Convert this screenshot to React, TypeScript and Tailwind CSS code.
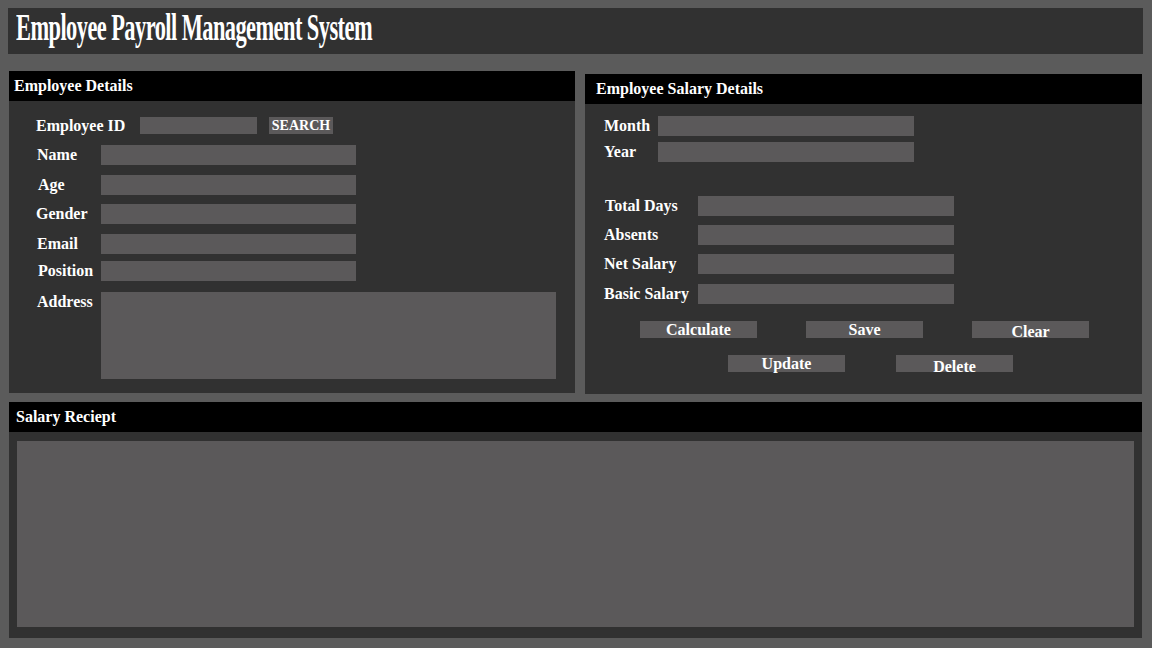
import React from 'react';

const serif = { fontFamily: '"Liberation Serif", "Times New Roman", serif' };

function Field({ w, h = 20 }: { w: number; h?: number }) {
  return <div className="bg-[#5b595a] shrink-0" style={{ width: w, height: h }} />;
}

function Btn({ label, className = '' }: { label: string; className?: string }) {
  return (
    <button
      className={`h-[17px] w-[117px] bg-[#5b595a] text-[16px] font-bold leading-[17px] text-white ${className}`}
    >
      {label}
    </button>
  );
}

function PanelHeader({ title, pl }: { title: string; pl: string }) {
  return (
    <div className={`flex h-[30px] items-center bg-black text-[16px] font-bold text-white ${pl}`}>
      {title}
    </div>
  );
}

export default function App() {
  return (
    <div className="h-[648px] w-[1152px] overflow-hidden bg-[#5b5b5b] text-white" style={serif}>
      {/* TITLE */}
      <div className="ml-2 mt-2 flex h-[46px] w-[1135px] items-center bg-[#313131] pl-2">
        <h1 className="mb-[8px] origin-left scale-x-[0.59] whitespace-nowrap text-[38px] font-bold leading-none tracking-tight">
          Employee Payroll Management System
        </h1>
      </div>

      <div className="ml-[9px] flex items-start gap-[10px]">
        {/* EMPLOYEE DETAILS */}
        <div className="mt-[17px] h-[322px] w-[566px] bg-[#313131]">
          <PanelHeader title="Employee Details" pl="pl-[5px]" />
          <div className="flex flex-col pl-[27px] pt-[16px] text-[16px] font-bold leading-[20px]">
            <div className="flex h-[17px] items-center">
              <span className="w-[104px]">Employee ID</span>
              <Field w={117} h={17} />
              <button className="ml-3 h-[17px] w-[64px] bg-[#5b595a] text-[14px] font-bold leading-[17px] text-white">
                SEARCH
              </button>
            </div>
            <div className="mt-[11px] flex h-[20px] items-center">
              <span className="w-[65px] pl-[1px]">Name</span>
              <Field w={255} />
            </div>
            <div className="mt-[10px] flex h-[20px] items-center">
              <span className="w-[65px] pl-[2px]">Age</span>
              <Field w={255} />
            </div>
            <div className="mt-[9px] flex h-[20px] items-center">
              <span className="w-[65px]">Gender</span>
              <Field w={255} />
            </div>
            <div className="mt-[10px] flex h-[20px] items-center">
              <span className="w-[65px] pl-[1px]">Email</span>
              <Field w={255} />
            </div>
            <div className="mt-[7px] flex h-[20px] items-center">
              <span className="w-[65px] pl-[2px]">Position</span>
              <Field w={255} />
            </div>
            <div className="mt-[11px] flex items-start">
              <span className="w-[65px] pl-[1px]">Address</span>
              <Field w={455} h={87} />
            </div>
          </div>
        </div>

        {/* SALARY DETAILS */}
        <div className="mt-[20px] h-[320px] w-[557px] bg-[#313131]">
          <PanelHeader title="Employee Salary Details" pl="pl-[11px]" />
          <div className="flex flex-col pl-[19px] pt-[12px] text-[16px] font-bold leading-[20px]">
            <div className="flex h-[20px] items-center">
              <span className="w-[54px]">Month</span>
              <Field w={256} />
            </div>
            <div className="mt-[6px] flex h-[20px] items-center">
              <span className="w-[54px]">Year</span>
              <Field w={256} />
            </div>
            <div className="mt-[34px] flex h-[20px] items-center">
              <span className="w-[94px] pl-[1px]">Total Days</span>
              <Field w={256} />
            </div>
            <div className="mt-[9px] flex h-[20px] items-center">
              <span className="w-[94px]">Absents</span>
              <Field w={256} />
            </div>
            <div className="mt-[9px] flex h-[20px] items-center">
              <span className="w-[94px]">Net Salary</span>
              <Field w={256} />
            </div>
            <div className="mt-[10px] flex h-[20px] items-center">
              <span className="w-[94px]">Basic Salary</span>
              <Field w={256} />
            </div>
            <div className="ml-[36px] mt-[17px] flex gap-[49px]">
              <Btn label="Calculate" />
              <Btn label="Save" />
              <Btn label="Clear" className="pt-[2px]" />
            </div>
            <div className="ml-[124px] mt-[17px] flex gap-[51px]">
              <Btn label="Update" />
              <Btn label="Delete" className="pt-[3px]" />
            </div>
          </div>
        </div>
      </div>

      {/* SALARY RECEIPT */}
      <div className="ml-[9px] mt-[8px] h-[236px] w-[1133px] bg-[#313131]">
        <PanelHeader title="Salary Reciept" pl="pl-[7px]" />
        <div className="px-[8px] pt-[9px]">
          <div className="h-[186px] w-[1117px] bg-[#5b595a]" />
        </div>
      </div>
    </div>
  );
}
